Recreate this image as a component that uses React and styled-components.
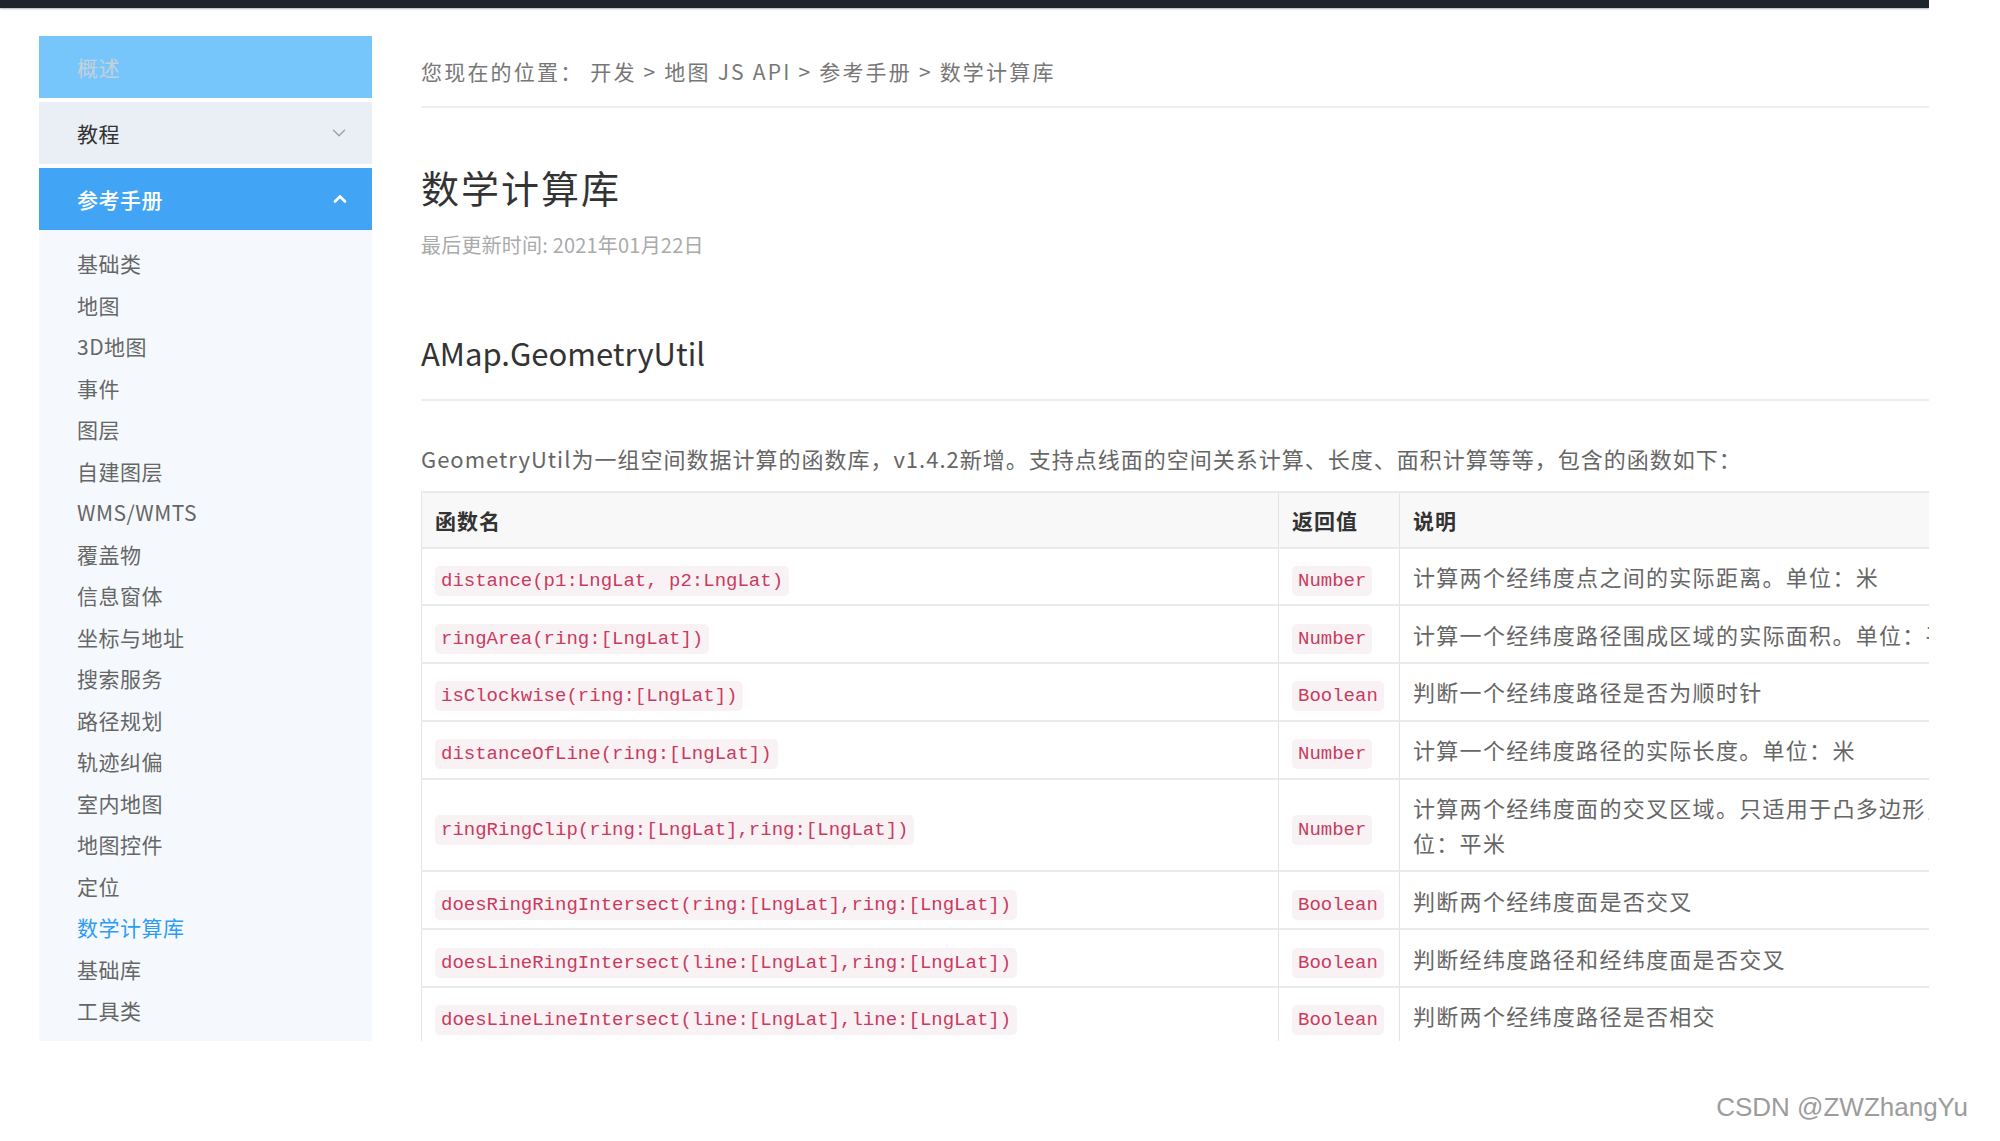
import React from 'react'
import styled, { createGlobalStyle } from 'styled-components'
import { ChevronDown, ChevronUp } from 'lucide-react'

const GlobalStyle = createGlobalStyle`
  html, body {
    margin: 0;
    padding: 0;
    background: #fff;
  }
  body {
    width: 2000px;
    height: 1141px;
    overflow: hidden;
    font-family: "Noto Sans CJK SC", "Noto Sans", sans-serif;
  }
`

const subItems = [
  '基础类', '地图', '3D地图', '事件', '图层', '自建图层', 'WMS/WMTS', '覆盖物',
  '信息窗体', '坐标与地址', '搜索服务', '路径规划', '轨迹纠偏', '室内地图',
  '地图控件', '定位', '数学计算库', '基础库', '工具类',
]

const rows = [
  ['distance(p1:LngLat, p2:LngLat)', 'Number', '计算两个经纬度点之间的实际距离。单位：米'],
  ['ringArea(ring:[LngLat])', 'Number', '计算一个经纬度路径围成区域的实际面积。单位：平米'],
  ['isClockwise(ring:[LngLat])', 'Boolean', '判断一个经纬度路径是否为顺时针'],
  ['distanceOfLine(ring:[LngLat])', 'Number', '计算一个经纬度路径的实际长度。单位：米'],
  ['ringRingClip(ring:[LngLat],ring:[LngLat])', 'Number', '计算两个经纬度面的交叉区域。只适用于凸多边形，单位：平米'],
  ['doesRingRingIntersect(ring:[LngLat],ring:[LngLat])', 'Boolean', '判断两个经纬度面是否交叉'],
  ['doesLineRingIntersect(line:[LngLat],ring:[LngLat])', 'Boolean', '判断经纬度路径和经纬度面是否交叉'],
  ['doesLineLineIntersect(line:[LngLat],line:[LngLat])', 'Boolean', '判断两个经纬度路径是否相交'],
]

function App() {
  return (
    <>
      <GlobalStyle />
      <Frame>
        <TopBar />
        <Body>
          <Sidebar>
            <MenuHead $variant="faded">概述</MenuHead>
            <MenuHead $variant="closed">
              教程
              <ChevronDown size={22} strokeWidth={1.5} color="#9aa1a8" />
            </MenuHead>
            <MenuHead $variant="open">
              参考手册
              <ChevronUp size={20} strokeWidth={3.2} color="#fff" />
            </MenuHead>
            <SubMenu>
              {subItems.map((item) => (
                <SubItem key={item} $active={item === '数学计算库'}>{item}</SubItem>
              ))}
            </SubMenu>
          </Sidebar>

          <Main>
            <Crumbs>
              您现在的位置：&nbsp;开发 &gt; 地图 JS API &gt; 参考手册 &gt; 数学计算库
            </Crumbs>
            <Title>数学计算库</Title>
            <Updated>最后更新时间: 2021年01月22日</Updated>
            <SubTitle>AMap.GeometryUtil</SubTitle>
            <Intro>
              GeometryUtil为一组空间数据计算的函数库，v1.4.2新增。支持点线面的空间关系计算、长度、面积计算等等，包含的函数如下：
            </Intro>
            <Table>
              <colgroup>
                <col style={{ width: 857 }} />
                <col style={{ width: 121 }} />
                <col style={{ width: 592 }} />
              </colgroup>
              <thead>
                <tr>
                  <Th>函数名</Th>
                  <Th>返回值</Th>
                  <Th>说明</Th>
                </tr>
              </thead>
              <tbody>
                {rows.map(([fn, ret, desc]) => (
                  <tr key={fn}>
                    <Td><Code>{fn}</Code></Td>
                    <Td><Code>{ret}</Code></Td>
                    <Td $desc>{desc}</Td>
                  </tr>
                ))}
              </tbody>
            </Table>
          </Main>
        </Body>
      </Frame>
      <Footer>
        <Watermark>CSDN @ZWZhangYu</Watermark>
      </Footer>
    </>
  )
}

export default App

const Frame = styled.div`
  width: 1929px;
  height: 1041px;
  overflow: hidden;
  background: #fff;
`

const TopBar = styled.div`
  height: 8px;
  background: #1f232b;
  box-shadow: 0 1px 2px rgba(0, 0, 0, 0.3);
`

const Body = styled.div`
  display: flex;
  align-items: stretch;
  height: 1033px;
`

const Sidebar = styled.div`
  width: 333px;
  flex-shrink: 0;
  margin: 28px 0 0 39px;
  display: flex;
  flex-direction: column;
`

const headColors = {
  faded: { bg: '#77c6fb', fg: '#c6d1da', weight: 400 },
  closed: { bg: '#e9eff5', fg: '#333', weight: 400 },
  open: { bg: '#42a4f5', fg: '#fff', weight: 500 },
}

const MenuHead = styled.div`
  height: 62px;
  margin-bottom: 4px;
  padding: 0 22px 0 38px;
  display: flex;
  align-items: center;
  justify-content: space-between;
  background: ${(p) => headColors[p.$variant].bg};
  color: ${(p) => headColors[p.$variant].fg};
  font-weight: ${(p) => headColors[p.$variant].weight};
  font-size: 21px;
  letter-spacing: 0.5px;
`

const SubMenu = styled.div`
  flex: 1;
  margin-top: -4px;
  padding-top: 13px;
  background: #f5f9fd;
`

const SubItem = styled.div`
  padding-left: 38px;
  line-height: 41.5px;
  font-size: 21px;
  letter-spacing: 0.5px;
  color: ${(p) => (p.$active ? '#2e9cf4' : '#666')};
`

const Main = styled.div`
  width: 1575px;
  flex-shrink: 0;
  margin-left: 49px;
  padding-top: 48px;
`

const Crumbs = styled.div`
  font-size: 21px;
  line-height: 30px;
  letter-spacing: 2.2px;
  color: #777;
  padding-bottom: 20px;
  border-bottom: 2px solid #eee;
`

const Title = styled.h1`
  margin: 53px 0 0;
  font-size: 38px;
  line-height: 52px;
  letter-spacing: 2px;
  font-weight: 400;
  color: #333;
`

const Updated = styled.div`
  margin-top: 18px;
  font-size: 20px;
  line-height: 28px;
  letter-spacing: 0.2px;
  color: #aaa;
`

const SubTitle = styled.h2`
  margin: 74px 0 0;
  padding-bottom: 26px;
  border-bottom: 2px solid #eee;
  font-size: 31px;
  line-height: 40px;
  font-weight: 400;
  color: #333;
`

const Intro = styled.p`
  margin: 40px 0 0;
  font-size: 22px;
  line-height: 34px;
  letter-spacing: 1px;
  color: #666;
`

const Table = styled.table`
  margin-top: 16px;
  width: 1570px;
  table-layout: fixed;
  border-collapse: collapse;
  border-top: 2px solid #e8eaec;
`

const Th = styled.th`
  text-align: left;
  padding: 9.75px 13px;
  line-height: 34px;
  font-size: 21px;
  letter-spacing: 1px;
  font-weight: 700;
  color: #333;
  background: #f8f8f8;
  border-bottom: 2px solid #e8eaec;
  border-left: 1.5px solid #e2e4e6;
`

const Td = styled.td`
  padding: 10.4px 13px;
  line-height: 35px;
  font-size: 22px;
  letter-spacing: ${(p) => (p.$desc ? '1.3px' : '0')};
  color: #666;
  vertical-align: middle;
  border-bottom: 2px solid #e8eaec;
  border-left: 1.5px solid #e2e4e6;
`

const Code = styled.span`
  padding: 4px 6px;
  border-radius: 5px;
  background: #f9f2f4;
  color: #c93a5f;
  font-family: "Liberation Mono", "DejaVu Sans Mono", monospace;
  font-size: 19px;
  line-height: 25px;
  letter-spacing: 0;
`

const Footer = styled.div`
  display: flex;
  justify-content: flex-end;
  padding: 50px 32px 0 0;
`

const Watermark = styled.div`
  font-family: "Liberation Sans", Arial, sans-serif;
  font-size: 26px;
  line-height: 32px;
  color: #9c9c9c;
`
